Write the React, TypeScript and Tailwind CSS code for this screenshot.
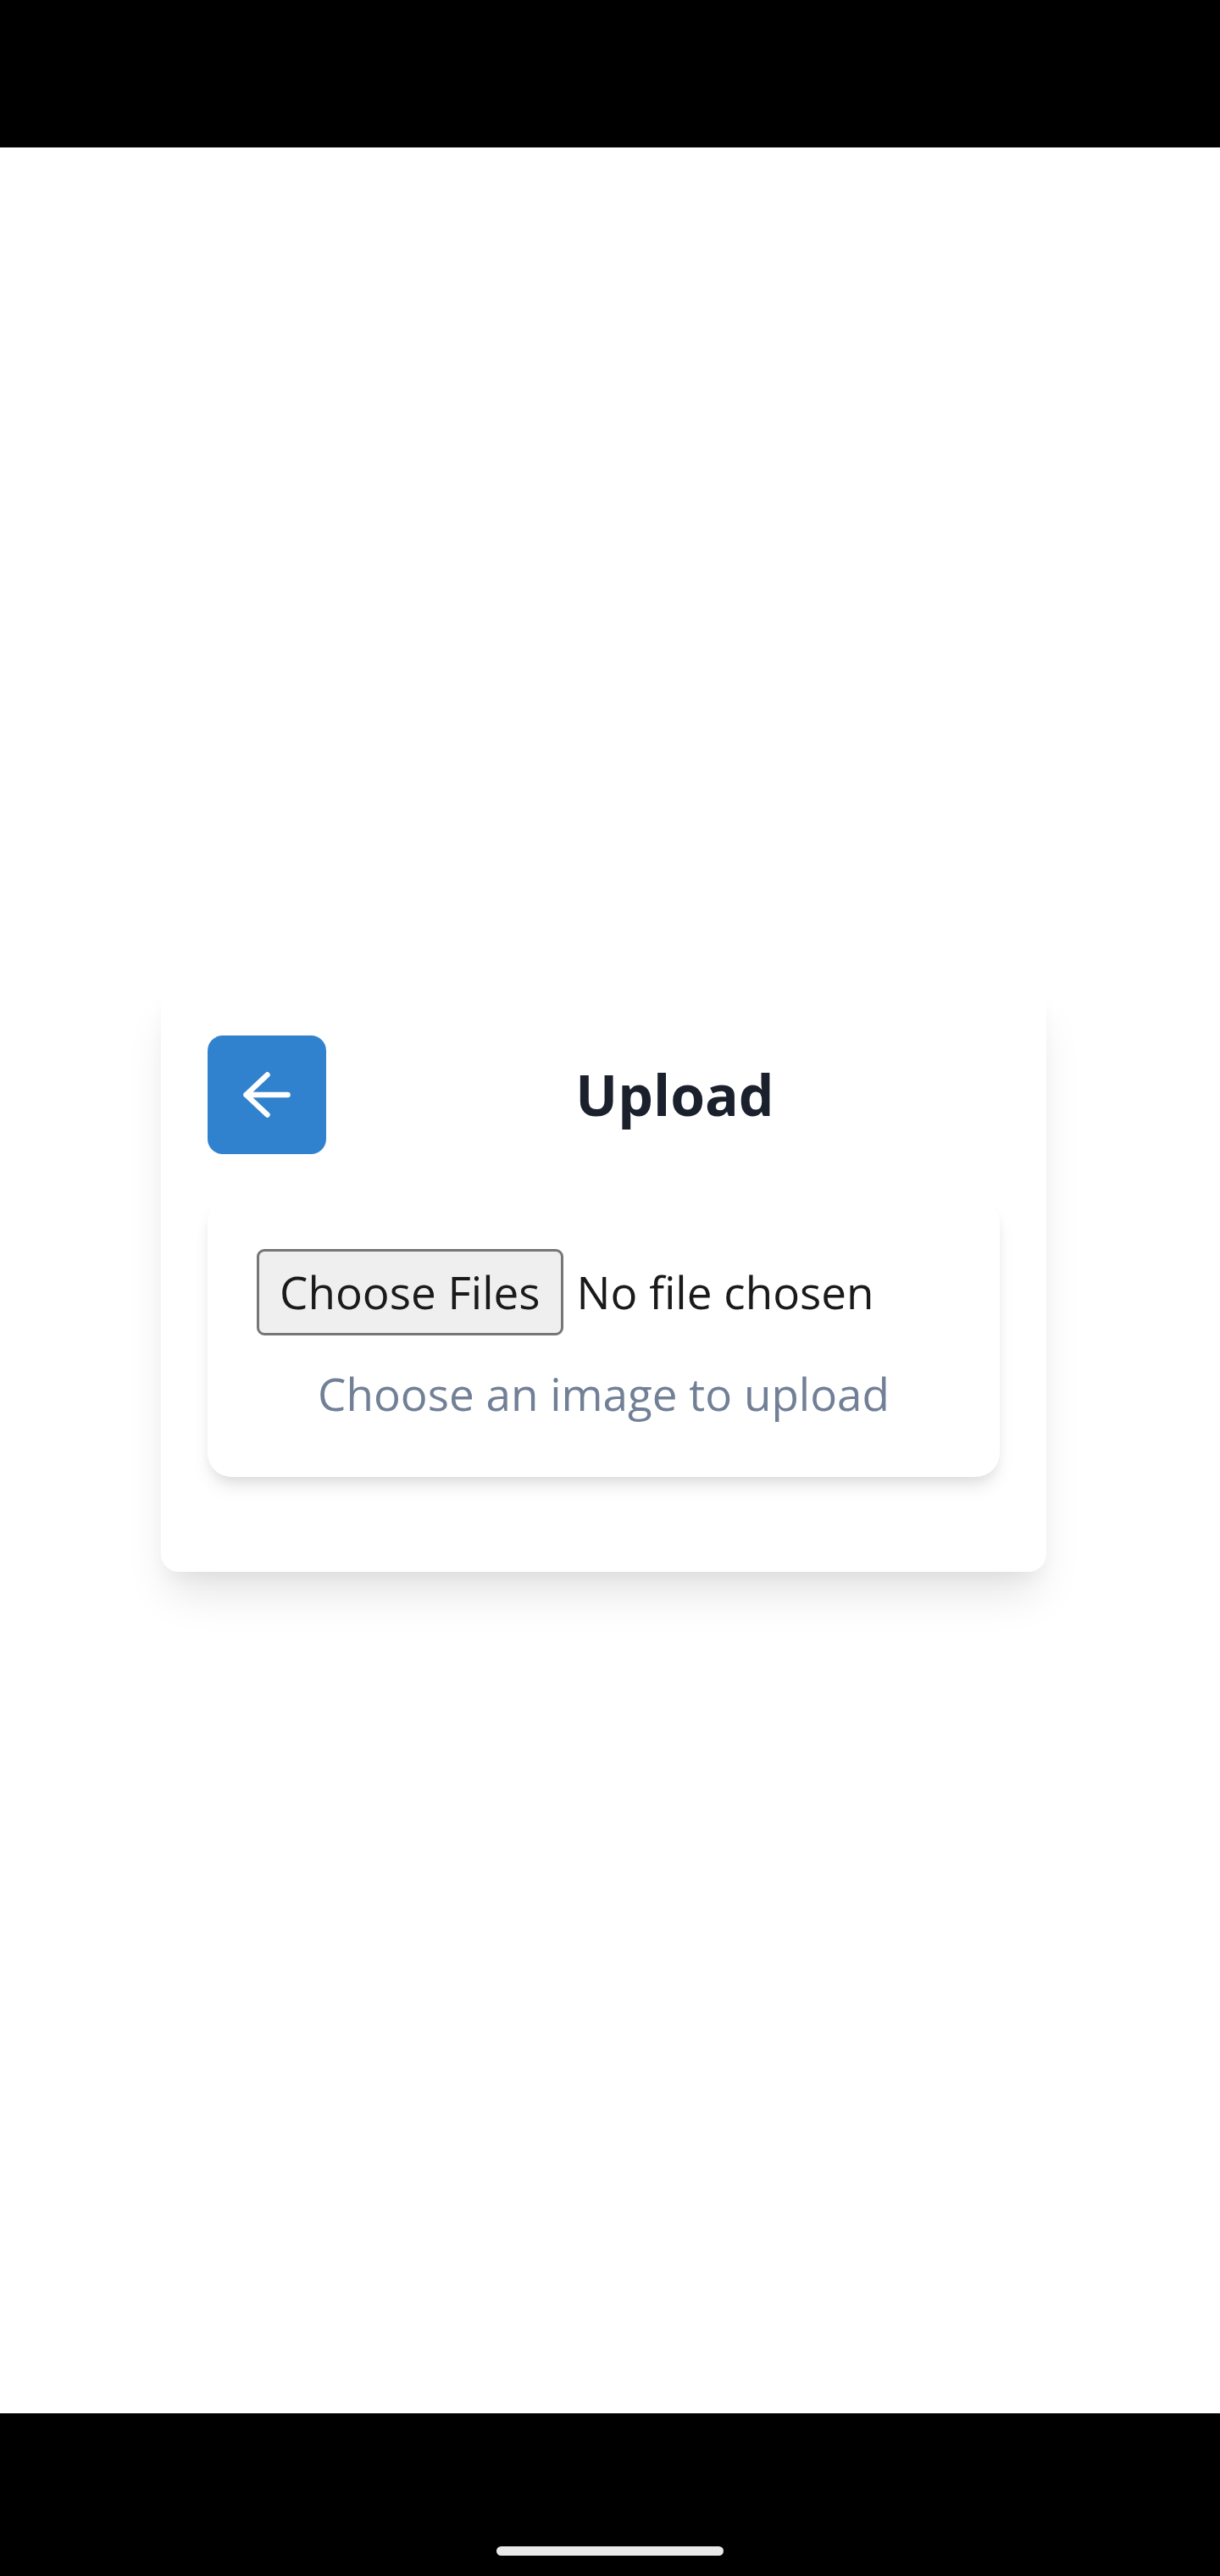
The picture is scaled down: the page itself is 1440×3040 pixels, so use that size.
import React from 'react';

const ArrowBack: React.FC = () => (
  <svg width="60" height="60" viewBox="0 0 60 60" fill="none">
    <path
      d="M5.5 30 H54.5 M30.5 6.5 L5.5 30 L30.5 53.5"
      stroke="#ffffff"
      strokeWidth="6.5"
      strokeLinecap="round"
      strokeLinejoin="round"
    />
  </svg>
);

export default function App() {
  return (
    <div className="flex h-[3040px] w-[1440px] flex-col bg-white font-['Open_Sans',sans-serif]">
      {/* status bar */}
      <div className="h-[174px] w-full shrink-0 bg-black" />

      <main className="flex flex-1 items-center pb-[6px] pl-[190px]">
        <div className="w-[1045px] rounded-[21px] bg-white px-[55px] pb-[112px] pt-[60px] shadow-[0_35px_52px_-10px_rgba(0,0,0,0.1),0_14px_21px_-7px_rgba(0,0,0,0.05)]">
          <div className="flex items-center">
            <button
              type="button"
              aria-label="Back"
              className="flex h-[140px] w-[140px] shrink-0 items-center justify-center rounded-[18px] bg-[#3182ce]"
            >
              <ArrowBack />
            </button>
            <h1 className="ml-[28px] flex-1 text-center text-[66px] font-bold leading-[1.2] text-[#1a202c]">
              Upload
            </h1>
          </div>

          <div className="mt-[53px] rounded-[28px] bg-white px-[58px] pb-[56px] pt-[59px] shadow-[0_14px_21px_-4px_rgba(0,0,0,0.1),0_7px_14px_-4px_rgba(0,0,0,0.06)]">
            <label className="flex h-[102px] items-center text-[53px] text-[#1a1a1a]">
              <input type="file" multiple accept="image/*" className="hidden" />
              <span className="flex h-[102px] items-center rounded-[9px] border-[3px] border-[#767676] bg-[#efefef] px-[24px] leading-none">
                Choose Files
              </span>
              <span className="ml-[16px] leading-none">No file chosen</span>
            </label>
            <p className="mt-[27px] text-center text-[53px] leading-[84px] text-[#718096]">
              Choose an image to upload
            </p>
          </div>
        </div>
      </main>

      {/* navigation bar */}
      <div className="flex h-[192px] w-full shrink-0 justify-center bg-black pt-[157px]">
        <div className="h-[11px] w-[268px] rounded-full bg-[#e8e8e8]" />
      </div>
    </div>
  );
}
